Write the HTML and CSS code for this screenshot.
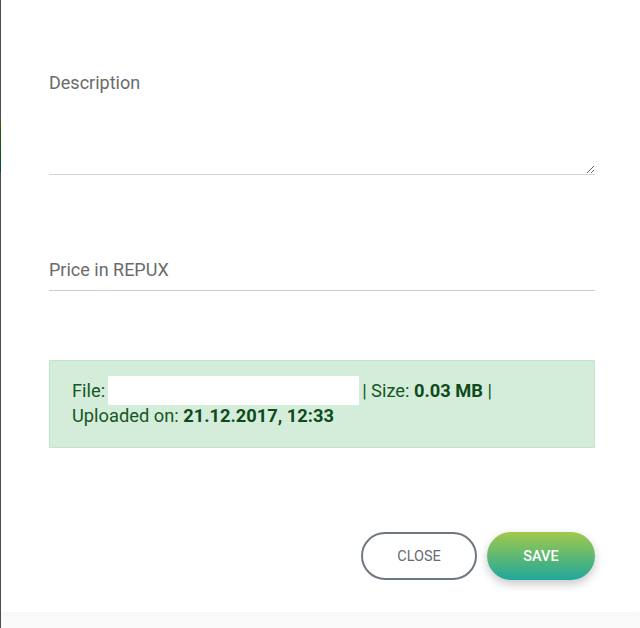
FILE: index.html
```html
<!DOCTYPE html>
<html lang="en">
<head>
<meta charset="utf-8">
<title>Edit file</title>
<link rel="stylesheet" href="styles.css">
</head>
<body>
<div class="page">
  <div class="backdrop"><div class="backdrop-accent"></div></div>
  <div class="modal">
    <div class="group group-desc">
      <label class="label" for="desc">Description</label>
      <textarea id="desc" class="textarea"></textarea>
    </div>
    <div class="group group-price">
      <label class="label" for="price">Price in REPUX</label>
      <input id="price" class="input" type="text">
    </div>
    <div class="alert">
      <div class="alert-line1">File:<span class="file-name"></span>| Size:&nbsp;<b>0.03 MB</b>&nbsp;|</div>
      <div class="alert-line2">Uploaded on: <b>21.12.2017, 12:33</b></div>
    </div>
    <div class="actions">
      <button class="btn btn-close" type="button">Close</button>
      <button class="btn btn-save" type="button">Save</button>
    </div>
  </div>
</div>
</body>
</html>
```
FILE: styles.css
```css
* { box-sizing: border-box; }
html, body { margin: 0; padding: 0; }
body {
  background: #fafafa;
  font-family: Roboto, "Liberation Sans", sans-serif;
  width: 640px;
  height: 628px;
  overflow: hidden;
}
.page {
  display: flex;
  height: 628px;
  align-items: flex-start;
}
.backdrop {
  width: 1px;
  height: 628px;
  background: #4d4d4d;
  padding-top: 122px;
  flex: none;
}
.backdrop-accent {
  height: 50px;
  background: linear-gradient(#365c00, #00503f);
}
.modal {
  flex: 1;
  height: 612px;
  background: #fff;
  padding: 70px 45px 0 48px;
  box-shadow: 0 3px 8px rgba(0,0,0,0.02);
}
.group { display: flex; flex-direction: column; }
.label {
  font-size: 18px;
  line-height: 26px;
  color: #6b6b6b;
}
.textarea {
  height: 79px;
  border: none;
  border-bottom: 1px solid #cfd3df;
  resize: vertical;
  outline: none;
  padding: 0;
  font: inherit;
}
.group-price { margin-top: 82px; }
.input {
  height: 8px;
  border: none;
  border-bottom: 1px solid #c9cdda;
  outline: none;
  padding: 0;
}
.alert {
  margin-top: 69px;
  background: #d4edda;
  border: 1px solid #c3e6cb;
  color: #155724;
  font-size: 18.3px;
  padding: 15px 22px 19px;
  height: 88px;
}
.alert b { font-weight: 700; color: #0e4a1c; }
.alert-line1 {
  display: flex;
  align-items: center;
  height: 29px;
  white-space: pre;
}
.file-name {
  display: inline-block;
  width: 251px;
  height: 29px;
  background: #fff;
  margin: 0 3px 0 3px;
}
.alert-line2 {
  line-height: 22px;
}
.actions {
  display: flex;
  justify-content: flex-end;
  gap: 10px;
  margin-top: 84px;
}
.btn {
  height: 48px;
  border-radius: 24px;
  font-family: Roboto, "Liberation Sans", sans-serif;
  font-size: 14.5px;
  text-transform: uppercase;
  cursor: pointer;
}
.btn-close {
  width: 116px;
  background: #fff;
  border: 2px solid #6f7780;
  color: #646c75;
}
.btn-save {
  width: 108px;
  border: none;
  color: #fff;
  font-weight: 500;
  background: linear-gradient(#a1c94b, #1fa79b);
  box-shadow: 0 4px 10px rgba(0,0,0,0.22);
}
```
